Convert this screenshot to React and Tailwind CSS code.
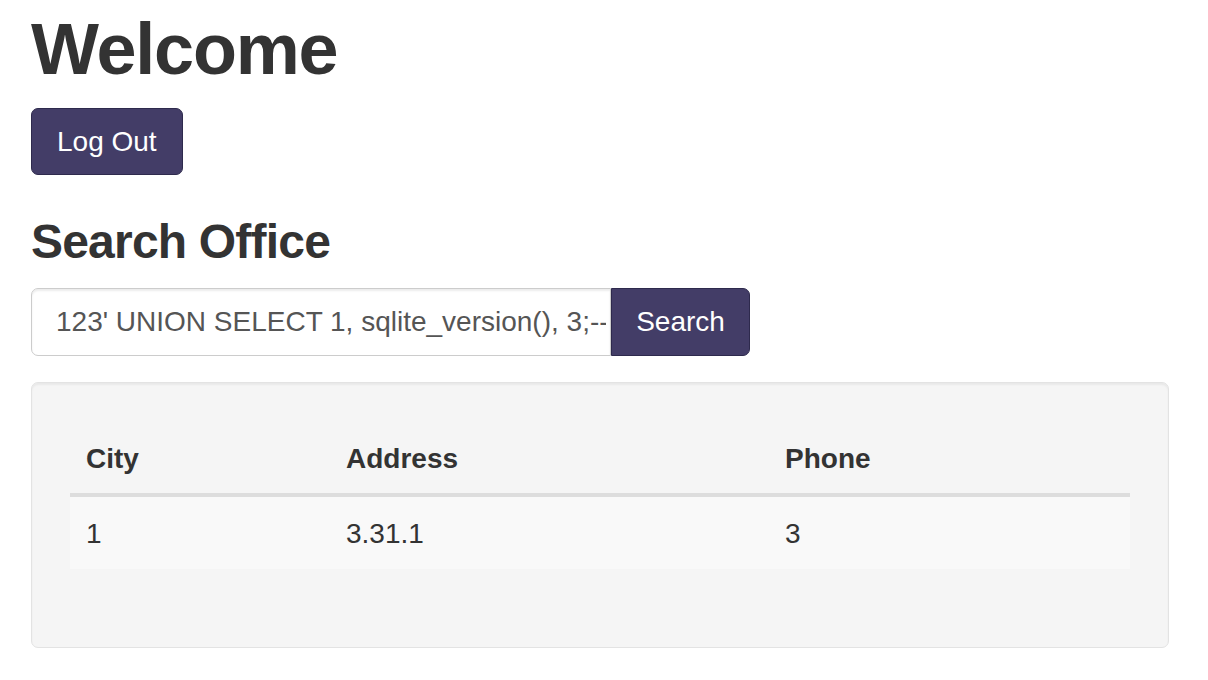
export default function App() {
    const rows = [{ city: "1", address: "3.31.1", phone: "3" }];

    return (
        <div
            className="min-h-[680px] bg-white px-[31px] pt-[10px] text-[28px] leading-[40px] text-[#333]"
            style={{ fontFamily: '"Liberation Sans", Arial, sans-serif' }}
        >
            <h1 className="mb-[19px] text-[72px] font-bold leading-[79px] tracking-[-1.2px]">
                Welcome
            </h1>
            <button className="h-[67px] rounded-[7px] border border-[#2e2a4d] bg-[#433d67] px-[25px] text-[28px] text-white">
                Log Out
            </button>

            <h3 className="mt-[40px] mb-[20px] text-[48px] font-bold leading-[53px] tracking-[-0.8px]">
                Search Office
            </h3>

            <div className="flex h-[68px] w-[719px]">
                <input
                    className="h-full w-[580px] rounded-l-[7px] border border-[#ccc] pl-[24px] pr-[4px] text-[28px] text-[#555] shadow-[inset_0_2px_2px_rgba(0,0,0,0.075)] outline-none"
                    defaultValue="123' UNION SELECT 1, sqlite_version(), 3;--"
                />
                <button className="h-full w-[139px] rounded-r-[7px] border border-[#2e2a4d] bg-[#433d67] text-[28px] text-white">
                    Search
                </button>
            </div>

            <div className="mt-[26px] w-[1138px] rounded-[7px] border border-[#e3e3e3] bg-[#f5f5f5] p-[38px] shadow-[inset_0_2px_2px_rgba(0,0,0,0.05)]">
                <table className="mb-[40px] w-full border-collapse text-left">
                    <thead>
                        <tr className="border-b-4 border-[#ddd]">
                            <th className="w-[260px] px-[16px] pt-[18px] pb-[14px] font-bold">City</th>
                            <th className="w-[439px] px-[16px] pt-[18px] pb-[14px] font-bold">Address</th>
                            <th className="px-[16px] pt-[18px] pb-[14px] font-bold">Phone</th>
                        </tr>
                    </thead>
                    <tbody>
                        {rows.map((row) => (
                            <tr key={row.city} className="bg-[#f9f9f9]">
                                <td className="px-[16px] pt-[17px] pb-[15px]">{row.city}</td>
                                <td className="px-[16px] pt-[17px] pb-[15px]">{row.address}</td>
                                <td className="px-[16px] pt-[17px] pb-[15px]">{row.phone}</td>
                            </tr>
                        ))}
                    </tbody>
                </table>
            </div>
        </div>
    );
}
